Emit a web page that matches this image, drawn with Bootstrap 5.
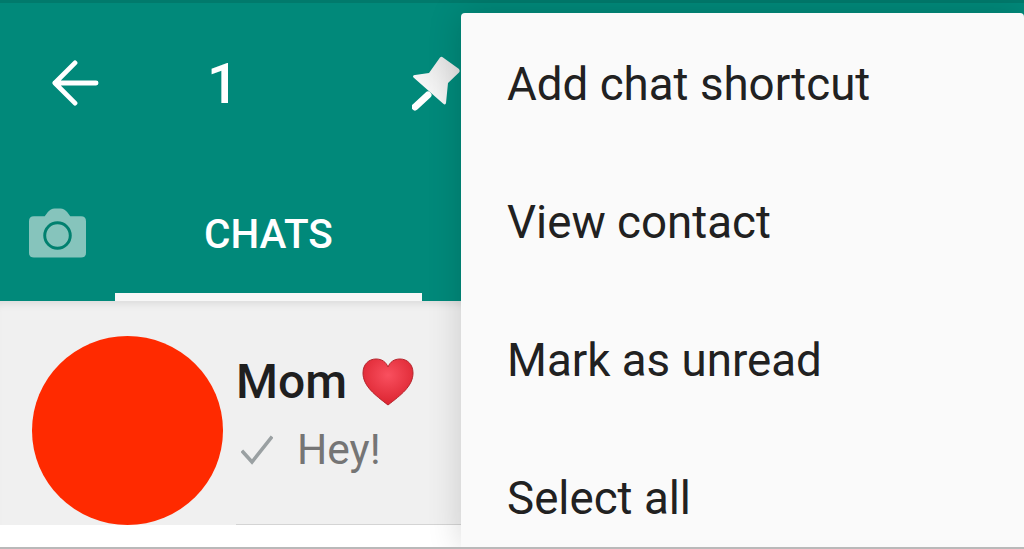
<!DOCTYPE html>
<html lang="en">
<head>
  <meta charset="UTF-8">
  <meta name="viewport" content="width=device-width, initial-scale=1">
  <title>Chats</title>
  <link href="https://cdn.jsdelivr.net/npm/bootstrap@5.3.0/dist/css/bootstrap.min.css" rel="stylesheet">
  <style>
    body { background: #fff; font-family: Roboto, "Liberation Sans", sans-serif; overflow: hidden; }
    .phone { width: 1024px; height: 549px; border-bottom: 2px solid #b9b9b9; }
    .wa-header { height: 301px; background: #01897a; border-top: 3px solid #017a6c; }
    .wa-top { height: 165px; padding-top: 53px; }
    .wa-back { width: 48px; height: 46px; margin-left: 51px; margin-top: 4px; }
    .wa-count { width: 313px; padding-left: 108px; font-size: 56px; font-weight: 500; line-height: 1; color: #fff; }
    .wa-pin { width: 50px; height: 56px; }
    .wa-tabs { height: 133px; }
    .wa-camera { width: 57px; height: 50px; margin-left: 29px; margin-top: 40px; }
    .wa-tab { width: 307px; margin-left: 29px; border-bottom: 8px solid #f7f7f7; color: #fff; font-size: 40.5px; font-weight: 500; line-height: 1; padding-top: 46px; text-align: center; }
    .chat-row { height: 224px; background: #f0f0f0; box-shadow: inset 0 8px 8px -6px rgba(0,0,0,.1); }
    .chat-avatar { width: 191px; height: 189px; margin: 35px 13px 0 32px; background: #ff2a00; border-radius: 50%; flex: none; }
    .chat-body { flex: 1; height: 224px; border-bottom: 1px solid #d4d4d4; padding-top: 53px; }
    .chat-name { font-size: 48px; font-weight: 500; line-height: 56px; color: #1f1f1f; }
    .chat-heart { width: 54px; height: 50px; margin-left: 14px; }
    .chat-last { font-size: 42.5px; line-height: 50px; color: #757575; margin-top: 15px; margin-left: 5px; }
    .chat-tick { width: 32px; height: 30px; margin-right: 24px; }
    .wa-menu.dropdown-menu { top: 13px; left: 461px; right: 0; bottom: 0; min-width: 0; padding: 3px 0 0; margin: 0; border: 0; border-radius: 4px 4px 0 0; background: #fafafa; box-shadow: 0 0 34px rgba(0,0,0,.16); overflow: hidden; }
    .wa-menu .dropdown-item { height: 138px; padding: 0 0 0 46px; display: flex; align-items: center; font-size: 45.7px; color: #212121; }
  </style>
</head>
<body>

<div class="phone position-relative overflow-hidden">
  <!-- toolbar + tabs -->
  <header class="wa-header">
    <div class="wa-top d-flex align-items-start">
      <svg class="wa-back" viewBox="0 0 48 48" fill="none" stroke="#fff" stroke-width="5" stroke-linecap="round" stroke-linejoin="round">
        <path d="M46 24H3M24 3 3 24l21 21"/>
      </svg>
      <div class="wa-count">1</div>
      <svg class="wa-pin" viewBox="0 0 50 56">
        <defs>
          <linearGradient id="pinFill" x1="0" y1="1" x2="1" y2="0">
            <stop offset="0" stop-color="#fff"/>
            <stop offset="1" stop-color="#dedede"/>
          </linearGradient>
        </defs>
        <path d="M28 1.500 Q29.500 0 31 1.500 L47 13 Q48.500 15 47 16.500 L36 27 L34 47 Q33.500 49.500 31 47.500 L1.500 21.500 Q0 19.500 3 19 L17 17 Z" fill="url(#pinFill)"/>
        <path d="M16 39 3 51" stroke="#fff" stroke-width="7" stroke-linecap="round"/>
      </svg>
    </div>
    <div class="wa-tabs d-flex align-items-stretch">
      <svg class="wa-camera" viewBox="0 0 58 50">
        <path d="M5 8h11l3-4q3-4 7-4h6q4 0 7 4l3 4h11q5 0 5 5v32q0 5-5 5H5q-5 0-5-5V13q0-5 5-5z" fill="#86c4bc"/>
        <circle cx="29" cy="27.500" r="13" fill="#86c4bc" stroke="#01806f" stroke-width="3"/>
      </svg>
      <div class="wa-tab">CHATS</div>
    </div>
  </header>

  <!-- chat row -->
  <div class="chat-row d-flex">
    <div class="chat-avatar"></div>
    <div class="chat-body">
      <div class="chat-name d-flex align-items-center">Mom
        <svg class="chat-heart" viewBox="0 0 54 50">
          <defs>
            <radialGradient id="heartFill" cx=".5" cy=".35" r=".7">
              <stop offset="0" stop-color="#f9505f"/>
              <stop offset="1" stop-color="#d9202c"/>
            </radialGradient>
          </defs>
          <path d="M27 48C14 38 2 29 2 16 2 7 8 2 15 2c6 0 10 3 12 8 2-5 6-8 12-8 7 0 13 5 13 14 0 13-12 22-25 32z" fill="url(#heartFill)" stroke="#b5242c" stroke-width="1"/>
        </svg>
      </div>
      <div class="chat-last d-flex align-items-center">
        <svg class="chat-tick" viewBox="0 0 32 30" fill="none" stroke="#9aa0a2" stroke-width="3.600" stroke-linecap="square">
          <path d="M2 17l9 10L30 3"/>
        </svg>
        Hey!
      </div>
    </div>
  </div>

  <!-- overflow menu -->
  <ul class="wa-menu dropdown-menu show list-unstyled">
    <li><a class="dropdown-item" href="#">Add chat shortcut</a></li>
    <li><a class="dropdown-item" href="#">View contact</a></li>
    <li><a class="dropdown-item" href="#">Mark as unread</a></li>
    <li><a class="dropdown-item" href="#">Select all</a></li>
  </ul>
</div>

<script src="https://cdn.jsdelivr.net/npm/bootstrap@5.3.0/dist/js/bootstrap.bundle.min.js"></script>
</body>
</html>
